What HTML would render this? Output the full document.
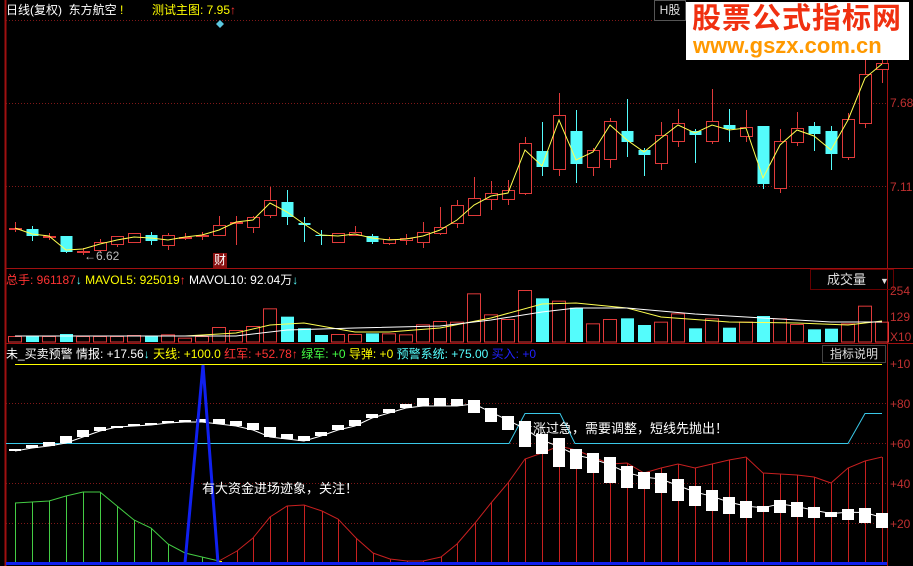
<!DOCTYPE html>
<html><head><meta charset="utf-8"><style>
body{margin:0;background:#000;width:913px;height:566px;overflow:hidden;font-family:"Liberation Sans","Noto Sans CJK SC",sans-serif;}
.t{position:absolute;font-size:12px;white-space:nowrap;line-height:14px}
</style></head><body>
<svg id="s" width="913" height="566" style="position:absolute;left:0;top:0" xmlns="http://www.w3.org/2000/svg">
<rect x="0" y="0" width="913" height="566" fill="#000"/>
<line x1="5.5" y1="0" x2="5.5" y2="566" stroke="#a01010" stroke-width="2"/>
<line x1="887.5" y1="20" x2="887.5" y2="566" stroke="#a01010"/>
<line x1="6" y1="20.5" x2="887" y2="20.5" stroke="#801818" stroke-dasharray="1,2"/>
<line x1="6" y1="103.5" x2="887" y2="103.5" stroke="#801818" stroke-dasharray="1,2"/>
<line x1="6" y1="186.5" x2="887" y2="186.5" stroke="#801818" stroke-dasharray="1,2"/>
<line x1="6" y1="268.5" x2="913" y2="268.5" stroke="#a01010"/>
<line x1="6" y1="343.5" x2="913" y2="343.5" stroke="#a01010"/>
<line x1="6" y1="403.5" x2="887" y2="403.5" stroke="#801818" stroke-dasharray="1,2"/>
<line x1="6" y1="443.5" x2="887" y2="443.5" stroke="#801818" stroke-dasharray="1,2"/>
<line x1="6" y1="483.5" x2="887" y2="483.5" stroke="#801818" stroke-dasharray="1,2"/>
<line x1="6" y1="523.5" x2="887" y2="523.5" stroke="#801818" stroke-dasharray="1,2"/>
<g id="g"></g>
<polygon points="220,20 224,24 220,28 216,24" fill="#5cc8e0"/>
</svg>
<div class="t" style="left:6px;top:3px;color:#fff">日线(复权)&nbsp; 东方航空 <span style="color:#ff0">!</span></div>
<div class="t" style="left:152px;top:3px;color:#ff0">测试主图: 7.95<span style="color:#f33">↑</span></div>
<div class="t" style="left:654px;top:0;width:30px;height:19px;border:1px solid #555;color:#ddd;line-height:19px;text-align:center">H股</div>
<div style="position:absolute;left:686px;top:2px;width:223px;height:58px;background:#fff"></div>
<div class="t" style="left:692px;top:2px;color:#f03010;font-size:29px;line-height:34px;font-weight:bold;letter-spacing:1px">股票公式指标网</div>
<div class="t" style="left:693px;top:34px;color:#ff9900;font-size:22px;line-height:24px;font-weight:bold">www.gszx.com.cn</div>
<div class="t" style="left:890px;top:96px;color:#c03030">7.68</div>
<div class="t" style="left:890px;top:180px;color:#c03030">7.11</div>
<div class="t" style="left:84px;top:249px;color:#bbb">←6.62</div>
<div class="t" style="left:213px;top:253px;width:14px;height:15px;background:#8a1010;color:#fff;text-align:center">财</div>
<div class="t" style="left:6px;top:273px;color:#f33">总手: 961187<span style="color:#5ff">↓</span> <span style="color:#ff0">MAVOL5: 925019</span><span style="color:#f33">↑</span> <span style="color:#fff">MAVOL10: 92.04万</span><span style="color:#5ff">↓</span></div>
<div class="t" style="left:810px;top:269px;width:82px;height:19px;border:1px solid #600;color:#ddd;line-height:19px;font-size:13px"><span style="margin-left:16px">成交量</span><span style="margin-left:14px;font-size:9px">▼</span></div>
<div class="t" style="left:890px;top:284px;color:#c03030">254</div>
<div class="t" style="left:890px;top:310px;color:#c03030">129</div>
<div class="t" style="left:890px;top:330px;color:#c03030">X10</div>
<div class="t" style="left:6px;top:347px;color:#fff">未_买卖预警 情报: +17.56<span style="color:#5ff">↓</span> <span style="color:#ff0">天线: +100.0</span> <span style="color:#f33">红军: +52.78↑</span> <span style="color:#4f4">绿军: +0</span> <span style="color:#ff0">导弹: +0</span> <span style="color:#5ff">预警系统: +75.00</span> <span style="color:#22f">买入: +0</span></div>
<div class="t" style="left:822px;top:345px;width:62px;height:16px;border:1px solid #444;color:#ddd;text-align:center;line-height:16px">指标说明</div>
<div class="t" style="left:890px;top:357px;color:#c03030">+10</div>
<div class="t" style="left:890px;top:397px;color:#c03030">+80</div>
<div class="t" style="left:890px;top:437px;color:#c03030">+60</div>
<div class="t" style="left:890px;top:477px;color:#c03030">+40</div>
<div class="t" style="left:890px;top:517px;color:#c03030">+20</div>
<script>
var g=document.getElementById('g'),h='';
function X(k){return 15+17*k;}
var C=[['r',228,228,222,232],['c',229,236,226,241],['r',236,236,233,240],['c',236,252,236,253],['r',251,252,248,255],['r',242,250,239,252],['r',236,244,236,247],['r',233,242,233,242],['c',235,241,232,245],['r',235,245,233,250],['r',237,238,233,240],['r',235,236,232,240],['r',225,235,216,236],['r',222,223,216,245],['r',217,227,216,233],['r',200,215,187,218],['c',202,217,190,225],['c',223,225,217,242],['c',235,236,230,245],['r',233,242,233,242],['r',232,235,226,236],['c',236,242,234,244],['r',239,243,237,245],['r',238,240,234,245],['r',232,242,222,248],['r',227,233,207,235],['r',205,223,200,228],['r',198,215,177,215],['r',193,199,181,210],['r',190,199,180,205],['r',143,193,137,195],['c',151,167,122,176],['r',115,169,93,176],['c',131,164,110,183],['r',150,167,148,176],['r',121,159,118,168],['c',131,142,99,157],['c',150,155,148,176],['r',135,163,122,170],['r',123,141,109,147],['c',131,135,129,163],['r',121,141,89,144],['c',125,129,109,142],['r',127,136,110,142],['c',126,184,126,189],['r',141,188,129,193],['r',128,142,112,146],['c',126,134,122,151],['c',131,154,126,170],['r',119,157,113,160],['r',74,123,60,128],['r',63,69,58,83]];
C.forEach(function(c,k){var x=X(k),col=c[0]=='r'?'#e03a3a':'#54fcfc';
h+='<line x1="'+(x+.5)+'" y1="'+c[3]+'" x2="'+(x+.5)+'" y2="'+c[4]+'" stroke="'+col+'"/>';
var hh=Math.max(c[2]-c[1],1);
if(c[0]=='r')h+='<rect x="'+(x-5.5)+'" y="'+(c[1]+.5)+'" width="12" height="'+hh+'" fill="#000" stroke="'+col+'"/>';
else h+='<rect x="'+(x-5.5)+'" y="'+c[1]+'" width="12" height="'+hh+'" fill="'+col+'"/>';});
var M=[228,234,236,250,249,244,240,237,238,240,237,235,230,222,220,203,212,224,235,236,234,238,240,239,236,230,220,205,196,193,150,166,120,160,152,125,140,152,138,125,133,125,130,128,178,145,130,136,150,120,78,64];
h+='<polyline fill="none" stroke="#ffff50" points="'+M.map(function(y,k){return X(k)+','+y}).join(' ')+'"/>';
var V=[213,213,213,207,213,213,213,210,213,208,218,213,186,195,183,130,155,190,210,207,207,205,205,208,178,168,170,85,148,162,75,100,107,128,175,162,160,180,170,145,190,160,188,170,153,160,177,193,191,175,122,170];
var VC='rcrcrrrrcrrrrrrrcccrrcrrrrrrrrrcrcrrccrrcrcrcrrccrrr';
V.forEach(function(v,k){var y=265+v/3,x=X(k),r=VC[k]!='c';
if(r)h+='<rect x="'+(x-6.5)+'" y="'+(y+.5)+'" width="13" height="'+(341.5-y)+'" fill="none" stroke="#e03a3a"/>';
else h+='<rect x="'+(x-6)+'" y="'+y+'" width="13" height="'+(342-y)+'" fill="#54fcfc"/>';});
function P(a,col){h+='<polyline fill="none" stroke="'+col+'" points="'+a.map(function(p){return X(p[0])+','+p[1]}).join(' ')+'"/>';}
P([[0,336],[10,336],[13,333],[15,325],[17,323],[20,332],[22,332],[25,328],[28,318],[31,304],[33,303],[36,308],[38,317],[42,322],[46,323],[49,325],[51,321]],'#ffff50');
P([[0,336],[13,336],[16,330],[20,328],[25,326],[28,320],[31,312],[33,308],[36,308],[40,314],[44,318],[48,322],[51,322]],'#fff');
// indicator
h+='<line x1="15" y1="364.5" x2="882" y2="364.5" stroke="#ff0"/>';
h+='<polyline fill="none" stroke="#3ac8e8" points="6,443.5 509,443.5 525,413.5 560,413.5 575,443.5 848,443.5 865,413.5 882,413.5"/>';
var G=[503,502,501,496,492,492,506,520,528,544,553,557];
G.forEach(function(y,k){h+='<line x1="'+(X(k)+.5)+'" y1="'+y+'" x2="'+(X(k)+.5)+'" y2="563" stroke="#4c4"/>';});
h+='<polyline fill="none" stroke="#4c4" points="'+G.map(function(y,k){return X(k)+','+y}).join(' ')+' 219,561"/>';
var R=[[219,561],[237,551],[253,538],[270,517],[287,506],[304,505],[322,511],[338,519],[356,538],[373,553],[390,559],[407,561],[423,561],[441,557],[457,544],[475,523],[491,503],[508,483],[525,459],[542,453],[559,446],[576,450],[593,457],[610,464],[627,463],[644,473],[661,468],[678,464],[695,468],[712,464],[729,460],[746,457],[763,473],[780,474],[797,475],[814,477],[831,483],[848,468],[865,461],[882,457]];
R.forEach(function(p){h+='<line x1="'+(p[0]+.5)+'" y1="'+p[1]+'" x2="'+(p[0]+.5)+'" y2="563" stroke="#c82020"/>';});
h+='<polyline fill="none" stroke="#c82020" points="'+R.map(function(p){return p.join(',')}).join(' ')+'"/>';
var W=[[449,451],[445,448],[442,446],[436,443],[430,437],[427,431],[426,427],[424,426],[423,425],[421,423],[420,422],[419,422],[419,424],[421,426],[423,430],[427,437],[434,439],[436,441],[432,436],[425,430],[420,426],[414,418],[409,413],[404,408],[398,406],[398,406],[399,406],[400,413],[408,422],[416,430],[421,447],[434,454],[438,467],[449,469],[453,473],[457,483],[466,488],[472,489],[473,493],[479,501],[486,506],[490,511],[497,514],[501,518],[506,512],[500,513],[502,517],[507,518],[512,517],[509,520],[508,523],[513,528]];
var L=[];W.forEach(function(w,k){var x=X(k);h+='<rect x="'+(x-6)+'" y="'+w[0]+'" width="12" height="'+Math.max(w[1]-w[0],2)+'" fill="#fff"/>';L.push(x+','+(k<27?w[1]:w[0]+ (w[1]-w[0])*0.3));});
h+='<polyline fill="none" stroke="#fff" points="'+L.join(' ')+'"/>';
h+='<rect x="218" y="561" width="4" height="3" fill="#ff0"/>';
h+='<line x1="6" y1="563.5" x2="887" y2="563.5" stroke="#1020f0" stroke-width="3"/>';
h+='<polyline fill="none" stroke="#1020f0" stroke-width="3" points="185,563 203,365 218,563"/>';
g.innerHTML=h;
</script>
<div class="t" style="left:202px;top:482px;color:#fff;font-size:13px">有大资金进场迹象，关注！</div>
<div class="t" style="left:520px;top:422px;color:#fff;font-size:13px">上涨过急，需要调整，短线先抛出！</div>
</body></html>
